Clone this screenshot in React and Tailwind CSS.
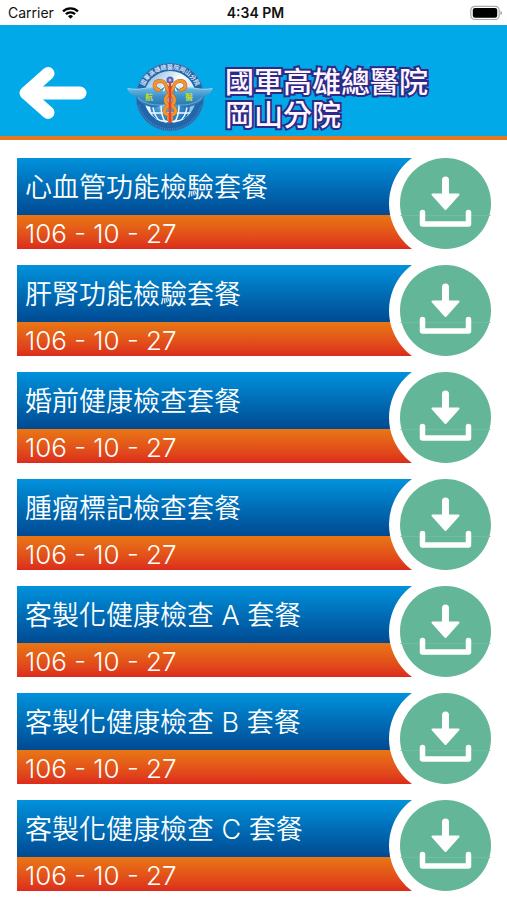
const packages = [
  '心血管功能檢驗套餐',
  '肝腎功能檢驗套餐',
  '婚前健康檢查套餐',
  '腫瘤標記檢查套餐',
  '客製化健康檢查 A 套餐',
  '客製化健康檢查 B 套餐',
  '客製化健康檢查 C 套餐',
];

function StatusBar() {
  return (
    <div className="grid h-[25px] grid-cols-3 items-center bg-white pt-px pr-1 pl-2 text-sm text-[#111]">
      <div className="flex items-center gap-2">
        <span>Carrier</span>
        <svg width="17" height="12" viewBox="0 0 17 12" fill="none" stroke="#000" strokeWidth="2.3" aria-hidden="true">
          <path d="M1 4.4a10.8 10.8 0 0 1 15 0" />
          <path d="M3.9 7.2a6.7 6.7 0 0 1 9.2 0" />
          <path d="M8.5 11.8 6 9.2a3.6 3.6 0 0 1 5 0z" fill="#000" stroke="none" />
        </svg>
      </div>
      <span className="text-center font-semibold">4:34 PM</span>
      <svg className="justify-self-end" width="33" height="16" viewBox="0 0 33 16" aria-hidden="true">
        <rect x="0.8" y="1.3" width="28.4" height="13.2" rx="4" fill="#fff" stroke="#aaa" strokeWidth="1.2" />
        <rect x="2.8" y="3" width="24.4" height="9.8" rx="2.2" fill="#000" />
        <path d="M30.5 5.7c2 .8 2 3.6 0 4.4z" fill="#999" />
      </svg>
    </div>
  );
}

function Emblem() {
  return (
    <svg width="86" height="70" viewBox="0 0 86 70" className="shrink-0" aria-hidden="true">
      <defs>
        <path id="rim" d="M15 35a28 28 0 0 1 56 0" />
        <clipPath id="disc">
          <circle cx="43" cy="35" r="26" />
        </clipPath>
        <linearGradient id="sky" x1="0" y1="0" x2="1" y2="1">
          <stop offset="0" stopColor="#6fa9dc" />
          <stop offset="0.4" stopColor="#f6fbfe" />
          <stop offset="0.7" stopColor="#cfe5f5" />
          <stop offset="1" stopColor="#3f90cc" />
        </linearGradient>
        <radialGradient id="globe" cx="0.4" cy="0.4" r="0.65">
          <stop offset="0" stopColor="#b5daf1" />
          <stop offset="0.5" stopColor="#3b94d0" />
          <stop offset="1" stopColor="#1a6cb5" />
        </radialGradient>
        <linearGradient id="wing" x1="0" y1="0" x2="0" y2="1">
          <stop offset="0" stopColor="#6fc0e6" />
          <stop offset="0.45" stopColor="#3e92c8" />
          <stop offset="1" stopColor="#2270b0" />
        </linearGradient>
      </defs>
      <circle cx="43" cy="35" r="34" fill="#1f66ab" stroke="#3f86c2" strokeWidth="0.8" />
      <circle cx="43" cy="35" r="26" fill="url(#sky)" />
      <g clipPath="url(#disc)">
        <circle cx="43" cy="43" r="20" fill="url(#globe)" />
        <g fill="none" stroke="#eef8fe" strokeWidth="1.5">
          <ellipse cx="43" cy="43" rx="17" ry="20" />
          <ellipse cx="43" cy="43" rx="9" ry="20" />
          <path d="M20 51h46M26 57q17 5 34 0" />
        </g>
      </g>
      <text fill="#f2f8fd" fontSize="6" fontWeight="500">
        <textPath href="#rim" startOffset="50%" textAnchor="middle">國軍高雄總醫院岡山分院</textPath>
      </text>
      <path d="M12 43a32 32 0 0 0 62 0" fill="none" stroke="#4688c2" strokeWidth="1.5" strokeDasharray="1 1" />
      <path d="M0 26c12 3 22-3 31 0 5 2 8 5 9 9v8c-6-2-9 4-16 2-8-2-13-6-15-11-5-1-8-4-9-8z" fill="url(#wing)" />
      <path d="M86 26c-12 3-22-3-31 0-5 2-8 5-9 9v8c6-2 9 4 16 2 8-2 13-6 15-11 5-1 8-4 9-8z" fill="url(#wing)" />
      <g fill="none" stroke="#a5daf3" strokeWidth="0.8">
        <path d="M1 26.5c12 3 21-3 30 0M85 26.5c-12 3-21-3-30 0" />
        <path d="M11 36q9 8 24 7M75 36q-9 8-24 7" stroke="#74b8df" />
      </g>
      <g fill="#c3dc32" fontSize="8" fontWeight="700" textAnchor="middle">
        <text x="22" y="38">航</text>
        <text x="62" y="38">醫</text>
      </g>
      <g fill="none" strokeLinecap="round">
        <g stroke="#b5652a" strokeWidth="3.8">
          <path d="M32 28c-7-2-5-9 1-9 8 0 5 9 11 13 6 5 4 10-2 12s-6 7-1 9 4 4 2 6" />
          <path d="M54 28c7-2 5-9-1-9-8 0-5 9-11 13-6 5-4 10 2 12s6 7 1 9-4 4-2 6" />
        </g>
        <g stroke="#f2952d" strokeWidth="2.8">
          <path d="M32 28c-7-2-5-9 1-9 8 0 5 9 11 13 6 5 4 10-2 12s-6 7-1 9 4 4 2 6" />
          <path d="M54 28c7-2 5-9-1-9-8 0-5 9-11 13-6 5-4 10 2 12s6 7 1 9-4 4-2 6" />
        </g>
        <path d="M43 22v38" stroke="#e5402f" strokeWidth="2.6" />
      </g>
      <circle cx="43" cy="18" r="3.6" fill="#5b5fb0" />
      <circle cx="43" cy="18" r="1.5" fill="#b9bce6" />
    </svg>
  );
}

function Header() {
  return (
    <header className="flex h-[115px] items-center border-b-4 border-[#e8761c] bg-[#02a9e8] pt-6 pl-[18px]">
      <button type="button" aria-label="返回" className="shrink-0">
        <svg width="70" height="54" viewBox="0 0 70 54" fill="none" stroke="#fff" strokeLinecap="round" strokeLinejoin="round" strokeWidth="13" aria-hidden="true">
          <path d="M30 7.5 8 27l22 19.5" />
          <path d="M12 27h50" />
        </svg>
      </button>
      <div className="ml-[39px] flex items-center gap-3 pt-2">
        <Emblem />
        <h1 className="pt-1 text-[29px] leading-[33px] font-medium whitespace-nowrap text-[#fff5ff] [paint-order:stroke_fill] [-webkit-text-stroke:4px_#2c2a86]">
          國軍高雄總醫院
          <br />
          岡山分院
        </h1>
      </div>
    </header>
  );
}

function PackageRow({ name }) {
  return (
    <li className="relative overflow-hidden">
      <div className="mr-[70px] text-[27px] whitespace-nowrap text-white">
        <h2 className="h-[57px] bg-linear-to-b from-[#0292dc] to-[#004a92] pl-2 leading-[60px] font-[350]">{name}</h2>
        <p className="h-[34px] bg-linear-to-b from-[#e97614] to-[#dc2a1c] pl-2 text-[26px] leading-[37px] font-[350]">106 - 10 - 27</p>
      </div>
      <button
        type="button"
        aria-label={`下載 ${name}`}
        className="absolute top-0 right-0 size-[91px] rounded-full bg-[#64b698] ring-[11px] ring-white"
      >
        <svg viewBox="0 0 91 91" fill="none" stroke="#fff" strokeLinecap="round" strokeLinejoin="round" aria-hidden="true">
          <path d="M1 57.5h89" stroke="#70bda1" strokeWidth="1" />
          <path d="M45.5 22v18" strokeWidth="7" />
          <path d="M32.5 36.5h26L45.5 51z" fill="#fff" strokeWidth="2" />
          <path d="M22.5 54.5V66h46V54.5" strokeWidth="5.5" />
        </svg>
      </button>
    </li>
  );
}

export default function App() {
  return (
    <div className="min-h-screen bg-white font-[Inter,'Noto_Sans_CJK_TC',sans-serif]">
      <StatusBar />
      <Header />
      <main>
        <ul className="flex flex-col gap-4 pt-[18px] pr-4 pb-2 pl-[17px]">
          {packages.map((name) => (
            <PackageRow key={name} name={name} />
          ))}
        </ul>
      </main>
    </div>
  );
}
